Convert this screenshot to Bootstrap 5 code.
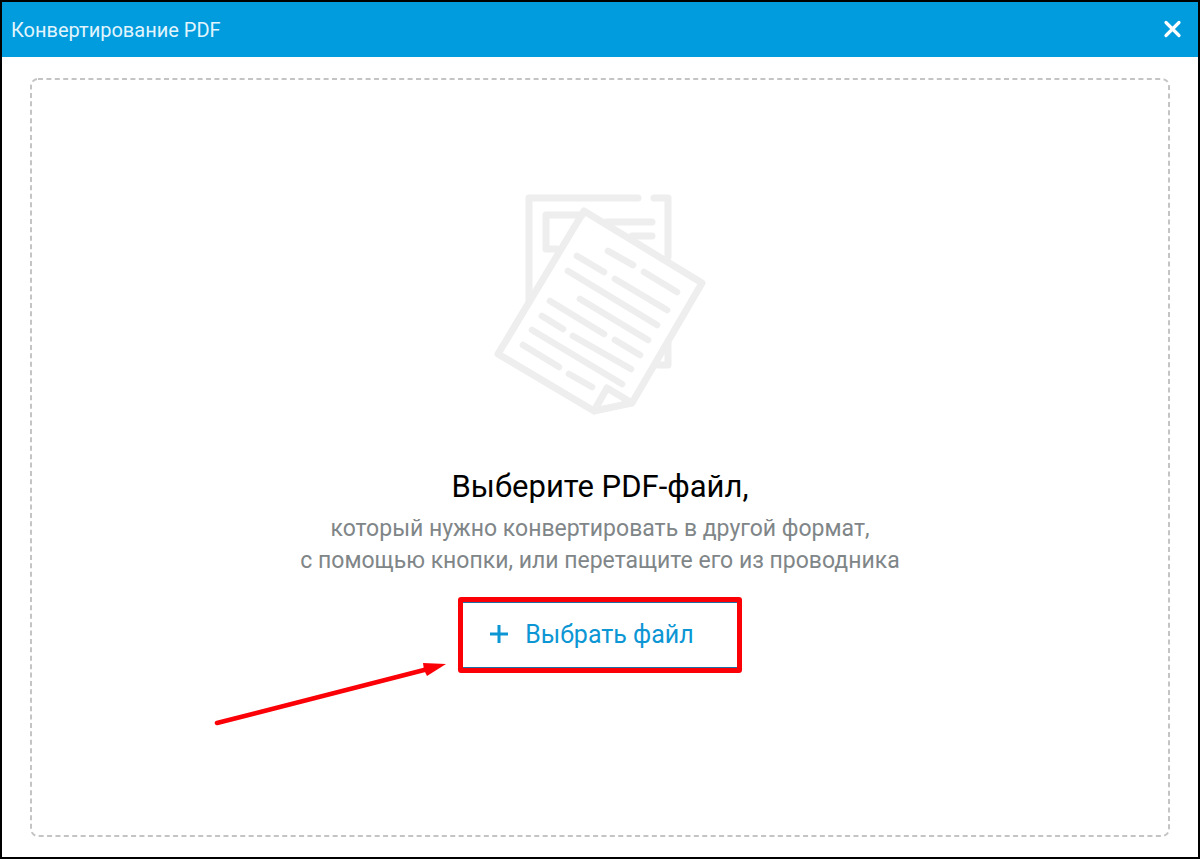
<!DOCTYPE html>
<html lang="ru">
<head>
<meta charset="utf-8">
<meta name="viewport" content="width=device-width, initial-scale=1">
<title>Конвертирование PDF</title>
<link href="https://cdn.jsdelivr.net/npm/bootstrap@5.3.0/dist/css/bootstrap.min.css" rel="stylesheet">
<style>
  body { font-family: Roboto, "Noto Sans", sans-serif; }
  .dialog-window { border: 2px solid #000; background: #fff; }
  .title-bar { background: #009cde; color: #fff; height: 55px; padding: 0 14px 0 9px; }
  .title-text { font-size: 20px; line-height: 24px; font-weight: 400; color: #e2f5fd; }
  .close-btn { width: 24px; height: 24px; }
  .drop-area { margin: 21px 28px 20px; padding: 112px 16px 24px; }
  .drop-outline { fill: none; stroke: #c4c4c4; stroke-width: 2; stroke-dasharray: 5 3.4; x: 1px; y: 1px; width: calc(100% - 2px); height: calc(100% - 2px); }
  .drop-title { font-size: 31px; line-height: 40px; color: #000; font-weight: 400; margin-top: 47px; }
  .drop-hint { font-size: 23px; line-height: 32px; color: #808688; margin: 6px 0 20px; }
  .pick-wrap { border: 5px solid #fb0007; border-radius: 3px; }
  .pick-btn { font-size: 25px; line-height: 32px; color: #0d96d4; border: 0 solid #1c6fa5; border-width: 1px 0; border-radius: 0; padding: 16px 43px 16px 26px; gap: 16px; }
  .pick-btn:hover { color: #007ab0; border-color: #1c6fa5; }
  .hint-arrow { right: calc(100% + 17px); top: 58px; }
</style>
</head>
<body>
<div class="dialog-window min-vh-100 d-flex flex-column">
  <header class="title-bar d-flex align-items-center justify-content-between">
    <h1 class="title-text mb-0">Конвертирование PDF</h1>
    <button type="button" class="close-btn btn p-0 border-0 d-flex align-items-center justify-content-center" aria-label="Закрыть">
      <svg width="20" height="20" viewBox="0 0 20 20" fill="none" stroke="#fff" stroke-width="3.2" stroke-linecap="round"><path d="M4 2.500l13 13M17 2.500l-13 13"/></svg>
    </button>
  </header>
  <main class="drop-area position-relative flex-grow-1 d-flex flex-column align-items-center text-center">
    <svg class="position-absolute top-0 start-0 w-100 h-100 pe-none" aria-hidden="true"><rect class="drop-outline" rx="7"/></svg>
    <svg width="220" height="230" viewBox="490 190 220 230" fill="none" stroke="#eee" stroke-width="7" stroke-linecap="round" stroke-linejoin="round" aria-hidden="true">
      <path d="M529 302V198H638M654 198H668V257M668 343V365H658"/>
      <path d="M582 215H546V249H557M606 222H652M632 236H652"/>
      <path d="M584 211L702 283L632 403L594 411L498 354ZM594 411L607 388L632 403"/>
      <path d="M608 251L633 265M577 256L604 272M644 272L677 292M615 279L667 310M568 271L657 325M580 299L648 340M550 301L604 334M542 316L563 329M615 340L640 355M573 336L631 369M532 330L622 384M523 345L559 367M569 374L592 387" stroke-width="6.6"/>
    </svg>
    <h2 class="drop-title mb-0">Выберите PDF-файл,</h2>
    <p class="drop-hint">который нужно конвертировать в другой формат,<br>с помощью кнопки, или перетащите его из проводника</p>
    <div class="pick-wrap position-relative">
      <button type="button" class="pick-btn btn d-flex align-items-center">
        <svg width="20" height="20" viewBox="0 0 20 20" stroke="#0d96d4" stroke-width="3" aria-hidden="true"><path d="M1 9H19M10 0V18"/></svg>
        Выбрать файл
      </button>
      <svg class="hint-arrow position-absolute" width="232" height="68" viewBox="214 660 232 68" aria-hidden="true">
        <path d="M217 723L428 669" stroke="#fb0007" stroke-width="4.6" stroke-linecap="round"/>
        <path d="M423 663L446 664L427 676L424 670Z" fill="#fb0007"/>
      </svg>
    </div>
  </main>
</div>
<script src="https://cdn.jsdelivr.net/npm/bootstrap@5.3.0/dist/js/bootstrap.bundle.min.js"></script>
</body>
</html>
